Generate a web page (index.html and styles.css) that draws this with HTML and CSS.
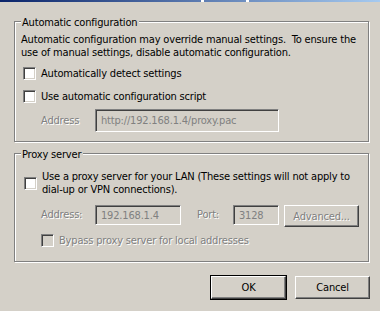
FILE: index.html
```html
<!DOCTYPE html>
<html>
<head>
<meta charset="utf-8">
<link rel="stylesheet" href="styles.css">
</head>
<body>
<div class="titlebar"></div>
<div class="dialog">
  <fieldset class="group g1">
    <legend>Automatic configuration</legend>
    <p class="desc">Automatic configuration may override manual settings.&nbsp; To ensure the use of manual settings, disable automatic configuration.</p>
    <div class="check c1"><span class="box"></span><span class="lbl">Automatically detect settings</span></div>
    <div class="check c2"><span class="box"></span><span class="lbl">Use automatic configuration script</span></div>
    <div class="addr-row">
      <span class="dis addr-lbl">Address</span>
      <span class="field url">http://192.168.1.4/proxy.pac</span>
    </div>
  </fieldset>
  <fieldset class="group g2">
    <legend>Proxy server</legend>
    <div class="check c3"><span class="box"></span><span class="lbl">Use a proxy server for your LAN (These settings will not apply to dial-up or VPN connections).</span></div>
    <div class="proxy-row">
      <span class="dis p-lbl">Address:</span>
      <span class="field ip">192.168.1.4</span>
      <span class="dis port-lbl">Port:</span>
      <span class="field port">3128</span>
      <span class="btn adv"><span class="dis">Advanced...</span></span>
    </div>
    <div class="check c4"><span class="box off"></span><span class="lbl dis">Bypass proxy server for local addresses</span></div>
  </fieldset>
  <div class="actions">
    <span class="btn def">OK</span>
    <span class="btn">Cancel</span>
  </div>
</div>
</body>
</html>
```
FILE: styles.css
```css
html, body {
  margin: 0;
  padding: 0;
}
body {
  width: 380px;
  height: 311px;
  overflow: hidden;
  background: #d4d0c8;
  color: #000;
  font-family: "DejaVu Sans Condensed", "DejaVu Sans", "Liberation Sans", sans-serif;
  font-size: 11px;
  line-height: 13px;
  letter-spacing: -0.18px;
}
.titlebar {
  height: 2px;
  background:
    linear-gradient(to right, transparent 201px, #fff 201px, #fff 204px, transparent 204px, transparent 246px, #fff 246px, #fff 249px, transparent 249px),
    linear-gradient(to right, #0a246a, #a6caf0);
}
.dialog {
  padding: 0 10px 0 14px;
}
.group {
  box-sizing: border-box;
  width: 355px;
  margin: 0;
  padding: 0 6px;
  border: 1px solid #808080;
  box-shadow: inset 1px 1px #fff, 1px 1px #fff;
  min-inline-size: 0;
}
.group legend {
  padding: 2px 2px 0 1px;
  line-height: 13px;
  background: #d4d0c8;
}
.g1 {
  margin-top: 12px;
  padding-bottom: 9px;
}
.desc {
  margin: 4px 0 0;
}
.check {
  display: flex;
  align-items: center;
  gap: 4px;
  padding-left: 2px;
}
.box {
  flex: none;
  box-sizing: border-box;
  width: 13px;
  height: 13px;
  border: 1px solid;
  border-color: #808080 #fff #fff #808080;
  box-shadow: inset 1px 1px #404040, inset -1px -1px #d4d0c8;
  background: #fff;
}
.box.off {
  background: #d4d0c8;
}
.lbl {
  padding-left: 1px;
}
.c1 { margin-top: 8px; }
.c2 { margin-top: 10px; }
.dis {
  color: #808080;
  text-shadow: 1px 1px 0 #fff;
}
.addr-row {
  display: flex;
  align-items: center;
  margin-top: 6px;
  padding-left: 20px;
}
.addr-lbl {
  width: 54px;
}
.field {
  box-sizing: border-box;
  display: flex;
  align-items: center;
  border: 1px solid;
  border-color: #808080 #fff #fff #808080;
  box-shadow: inset 1px 1px #404040, inset -1px -1px #d4d0c8;
  background: #d4d0c8;
  color: #808080;
  padding-left: 5px;
}
.url {
  width: 184px;
  height: 23px;
}
.g2 {
  margin-top: 4px;
  padding-bottom: 14px;
}
.c3 {
  margin-top: 9px;
  padding-left: 3px;
}
.proxy-row {
  display: flex;
  align-items: flex-start;
  margin-top: 9px;
  padding-left: 20px;
}
.p-lbl {
  width: 54px;
  line-height: 20px;
}
.ip {
  width: 86px;
  height: 20px;
}
.port-lbl {
  width: 36px;
  padding-left: 16px;
  line-height: 20px;
}
.port {
  width: 46px;
  height: 20px;
}
.btn {
  box-sizing: border-box;
  display: flex;
  align-items: center;
  justify-content: center;
  width: 75px;
  height: 23px;
  border: 1px solid;
  border-color: #fff #404040 #404040 #fff;
  box-shadow: inset -1px -1px #808080;
  background: #d4d0c8;
}
.adv {
  height: 22px;
  margin-left: 5px;
}
.c4 {
  margin-top: 7px;
  padding-left: 20px;
}
.actions {
  display: flex;
  justify-content: flex-end;
  gap: 9px;
  margin-top: 14px;
}
.btn.def {
  outline: 1px solid #000;
  outline-offset: 0;
}
```
